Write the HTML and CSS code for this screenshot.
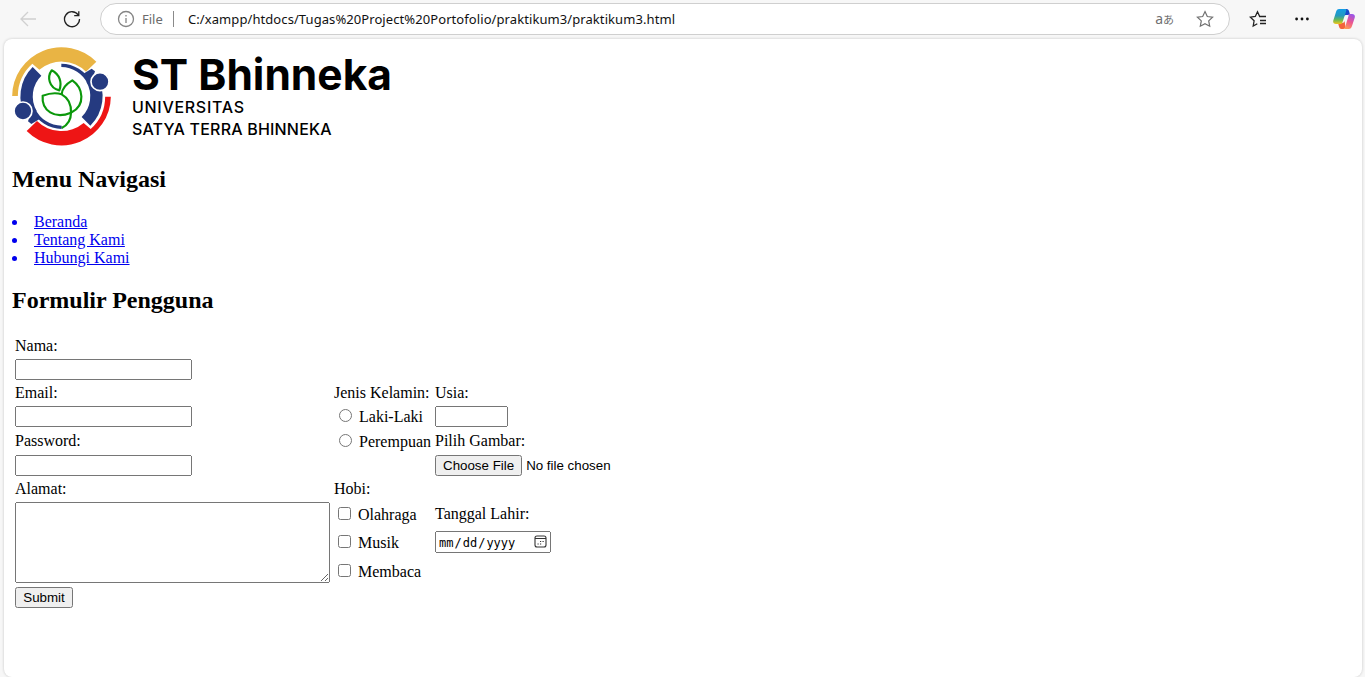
FILE: index.html
```html
<!DOCTYPE html>
<html lang="id">
<head>
<meta charset="utf-8">
<title>ST Bhinneka</title>
<link rel="stylesheet" href="styles.css">
</head>
<body>
<header class="toolbar">
  <svg class="back" width="18" height="18" viewBox="0 0 18 18"><path d="M9 2 2 9l7 7M2 9h15"/></svg>
  <svg class="reload" width="18" height="18" viewBox="0 0 18 18"><path d="M15.2 5A7.5 7.5 0 1 0 16.5 9M15.8 1.2V5.6H11.2"/></svg>
  <div class="address">
    <svg class="info" width="18" height="18" viewBox="0 0 18 18"><circle cx="9" cy="9" r="7.5"/><path d="M9 8v5M9 5v1.4"/></svg>
    <span class="scheme">File</span>
    <span class="divider"></span>
    <svg class="url" width="490" height="20"><text x="0" y="15" textLength="487">C:/xampp/htdocs/Tugas%20Project%20Portofolio/praktikum3/praktikum3.html</text></svg>
    <span class="translate">a<small>あ</small></span>
    <svg class="star" width="18" height="18" viewBox="0 0 18 18"><path d="M9 1.6l2.3 4.9 5.3.7-3.9 3.7 1 5.3L9 13.6l-4.7 2.6 1-5.3L1.4 7.2l5.3-.7z"/></svg>
  </div>
  <svg class="favorites" width="18" height="18" viewBox="0 0 18 18"><path d="M11.500 6.500h-.8L8.500 1.800 6.300 6.500 1.400 7.200l3.700 3.600-.9 5.200 4.100-2.200M11.500 6.500H17M11 10.500h6M11 13.500h6"/></svg>
  <svg class="more" width="16" height="6" viewBox="0 0 16 6"><circle cx="2.600" cy="3" r="1.400"/><circle cx="8" cy="3" r="1.400"/><circle cx="13.400" cy="3" r="1.400"/></svg>
  <svg class="copilot" width="22" height="20" viewBox="0 0 22 20">
    <defs>
      <linearGradient id="cool" x1="0" y1="0" x2="0" y2="1"><stop offset="0" stop-color="#139ce6"/><stop offset=".45" stop-color="#2599bd"/><stop offset=".72" stop-color="#69b954"/><stop offset="1" stop-color="#f2c51c"/></linearGradient>
      <linearGradient id="warm" x1=".7" y1="0" x2=".3" y2="1"><stop offset="0" stop-color="#9a55e8"/><stop offset=".5" stop-color="#ed568f"/><stop offset="1" stop-color="#ff9d54"/></linearGradient>
    </defs>
    <path fill="#1748c9" d="M10 0h3.500c1.700 0 2.200 1 2.700 2.500L17 6h-4c-1.600 0-2.200.7-2.700 2.200z"/>
    <path fill="#f3643c" d="M5 14h4.200c1.300 0 2-.8 2.400-2l.8 5.700c-.5 1.700-1.300 2.300-2.500 2.300H8.500c-1.700 0-2-1-2.500-2.500z"/>
    <path fill="url(#cool)" d="M6.200 0h6c1.300 0 1.300 1 1 2L9.600 13c-.5 1.400-1 2-2.500 2H3C.5 15-.2 13.500.3 11.500L3 3C3.600 1 4.300 0 6.200 0z"/>
    <path fill="url(#warm)" d="M15 5h4c2.500 0 3.300 1.700 2.700 3.700L19 17c-.6 2-1.500 3-3.300 3H9.800c1.200 0 2-.8 2.400-2.200l3.200-10.600c.3-1 .3-2.200-.4-2.200z"/>
  </svg>
</header>
<main class="page">
  <svg class="logo" width="390" height="99" viewBox="12 47 390 99">
    <g class="emblem" transform="translate(0 40) scale(.33333)">
      <path class="gold" d="M36.500 168A148 148 0 0 1 289 65L258 95A104 104 0 0 0 118 89L97 71A131 131 0 0 0 53.500 168z"/>
      <path class="red" transform="rotate(180 184.500 169)" d="M36.500 168A148 148 0 0 1 289 65L258 95A104 104 0 0 0 118 89L97 71A131 131 0 0 0 53.500 168z"/>
      <g class="navy">
        <path stroke-width="37" d="M275 116A105.500 105.500 0 0 1 258 244"/>
        <path stroke-width="10" d="M184 76A93 93 0 0 1 268 130"/>
        <path class="tab" d="M250 101 275 86l10 8-10 30-12 4z"/>
        <circle cx="300" cy="125" r="27"/>
      </g>
      <g class="navy" transform="rotate(180 184.500 169)">
        <path stroke-width="37" d="M275 116A105.500 105.500 0 0 1 258 244"/>
        <path stroke-width="10" d="M184 76A93 93 0 0 1 268 130"/>
        <path class="tab" d="M250 101 275 86l10 8-10 30-12 4z"/>
        <circle cx="300" cy="125" r="27"/>
      </g>
      <g class="leaf">
        <path d="M155 91C141 110 146 143 178 151 187 128 179 103 155 91z"/>
        <path d="M185 163C186 145 200 131 217 121 250 144 257 195 215 217"/>
        <path d="M128 167C150 159 168 157 185 163 205 174 214 193 213 218 164 239 124 212 128 167z"/>
        <path d="M213 218C213 237 203 255 185 264"/>
      </g>
    </g>
    <text class="brand" x="132" y="90" textLength="260" lengthAdjust="spacingAndGlyphs">ST Bhinneka</text>
    <text class="sub" x="132" y="113" textLength="112">UNIVERSITAS</text>
    <text class="sub" x="132" y="135" textLength="199.500">SATYA TERRA BHINNEKA</text>
  </svg>
  <h2>Menu Navigasi</h2>
  <nav>
    <ul>
      <li><a href="#">Beranda</a></li>
      <li><a href="#">Tentang Kami</a></li>
      <li><a href="#">Hubungi Kami</a></li>
    </ul>
  </nav>
  <h2>Formulir Pengguna</h2>
  <form>
    <label class="c1 r1">Nama:</label>
    <input class="c1 r2 field" type="text">
    <label class="c1 r3">Email:</label>
    <input class="c1 r4 field" type="text">
    <label class="c1 r5">Password:</label>
    <input class="c1 r6 field" type="password">
    <label class="c1 r7">Alamat:</label>
    <textarea class="c1 r8"></textarea>
    <button class="c1 r11" type="button">Submit</button>

    <span class="c2 r3">Jenis Kelamin:</span>
    <label class="c2 r4 option"><input type="radio" name="jk"> Laki-Laki</label>
    <label class="c2 r5 option female"><input type="radio" name="jk"> Perempuan</label>
    <span class="c2 r7">Hobi:</span>
    <label class="c2 r8 hobby"><input type="checkbox"> Olahraga</label>
    <label class="c2 r9 hobby"><input type="checkbox"> Musik</label>
    <label class="c2 r10 hobby last"><input type="checkbox"> Membaca</label>

    <span class="c3 r3">Usia:</span>
    <input class="c3 r4 age" type="number">
    <span class="c3 r5">Pilih Gambar:</span>
    <input class="c3 r6 file" type="file">
    <span class="c3 r8 birth">Tanggal Lahir:</span>
    <span class="c3 r9 datebox">
      <input class="date" type="date">
      <svg class="calendar" width="13" height="13" viewBox="0 0 13 13"><rect x="1" y="1" width="11" height="11" rx="2"/><path d="M1 3.500h11M6 6.500h1.200M8.500 6.500h1.200M3.500 9h1.200M6 9h1.200"/></svg>
    </span>
  </form>
</main>
</body>
</html>
```
FILE: styles.css
```css
* { box-sizing: border-box; }
body {
  margin: 0;
  height: 677px;
  overflow: hidden;
  background: #f7f7f7;
  font: 16px/18px "Liberation Serif", serif;
  color: #000;
}
.toolbar {
  height: 39px;
  display: flex;
  align-items: center;
  padding: 0 9px 1px 19px;
  font-family: "Noto Sans", sans-serif;
}
.toolbar svg { flex: none; fill: none; stroke: #222; stroke-width: 1.3; }
.toolbar .back { stroke: #d0d0d0; }
.toolbar .reload { margin-left: 26px; }
.address {
  width: 1130px;
  height: 32px;
  margin-left: 19px;
  padding: 0 15px 0 16px;
  display: flex;
  align-items: center;
  background: #fff;
  border: 1px solid #cfcfcf;
  border-radius: 16px;
}
.toolbar .info { stroke: #858585; }
.scheme { width: 23px; margin-left: 7px; font-size: 13px; color: #6b6b6b; }
.divider { width: 1px; height: 16px; margin: 0 14px 0 8px; background: #8a8a8a; }
.toolbar .url { fill: #111; stroke: none; font-size: 13px; }
.translate { margin-left: auto; margin-right: 22px; font-size: 14px; color: #707070; white-space: nowrap; }
.translate small { font: 11px "Noto Sans CJK JP", sans-serif; }
.toolbar .star { stroke: #707070; stroke-width: 1.2; }
.toolbar .favorites { margin-left: 19px; }
.toolbar .more { margin-left: 27px; fill: #111; stroke: none; }
.toolbar .copilot { margin-left: 23px; stroke: none; }

.page {
  width: 1358px;
  height: 638px;
  margin-left: 4px;
  padding: 8px;
  background: #fff;
  border-radius: 8px;
  box-shadow: 0 0 3px rgba(0, 0, 0, .2);
}
.logo { display: block; }
.emblem { fill: none; }
.gold { fill: #e9b444; }
.red { fill: #ee1515; }
.navy { stroke: #253a80; }
.navy .tab { fill: #253a80; stroke: none; }
.navy circle { fill: #253a80; stroke: #fff; stroke-width: 5; }
.leaf { stroke: #0b980b; stroke-width: 6.500; stroke-linejoin: round; }
.brand { font: 700 43px Inter, sans-serif; }
.sub { font: 500 16px Inter, sans-serif; }

h2 { margin: 19px 0 20px; font-size: 24px; line-height: 28px; }
nav ul { margin: 0; padding: 0; list-style: disc inside; color: #00e; }
nav a { color: #00e; }

form {
  display: grid;
  grid-template-columns: 315px 97px 200px;
  grid-template-rows: 22px 25px 22px 26px 23px 25px 22px 28px 28px 29px 21px;
  column-gap: 4px;
  margin: 23px 0 0 3px;
  align-items: start;
  justify-items: start;
  white-space: nowrap;
}
form input, form button, form textarea { margin: 0; font-family: "Liberation Sans", sans-serif; font-size: 13.333px; }
.c1 { grid-column: 1; }
.c2 { grid-column: 2; }
.c3 { grid-column: 3; }
.r1 { grid-row: 1; }
.r2 { grid-row: 2; }
.r3 { grid-row: 3; }
.r4 { grid-row: 4; }
.r5 { grid-row: 5; }
.r6 { grid-row: 6; }
.r7 { grid-row: 7; }
.r8 { grid-row: 8; }
.r9 { grid-row: 9; }
.r10 { grid-row: 10; }
.r11 { grid-row: 11; }
.field { width: 177px; height: 21px; }
form textarea.c1 { grid-row: 8 / 11; width: 315px; height: 81px; }
button { width: 58px; height: 21px; padding: 1px 6px; }
.option.female { margin-top: -1px; }
.option input { margin: 3px 3px 0 5px; }
.hobby { padding-top: 2px; }
.hobby.last { padding-top: 3px; }
.hobby input { margin: 3px 3px 0 4px; }
.age { width: 73px; height: 21px; }
.birth { padding-top: 3px; }
.datebox { position: relative; display: flex; margin-top: 1px; }
form .date { width: 116px; height: 22px; padding-top: 2px; font-family: "DejaVu Sans Mono", monospace; font-size: 12px; }
.date::-webkit-calendar-picker-indicator { opacity: 0; }
.calendar { position: absolute; right: 4px; top: 4px; fill: none; stroke: #333; stroke-width: 1.1; pointer-events: none; }
```
